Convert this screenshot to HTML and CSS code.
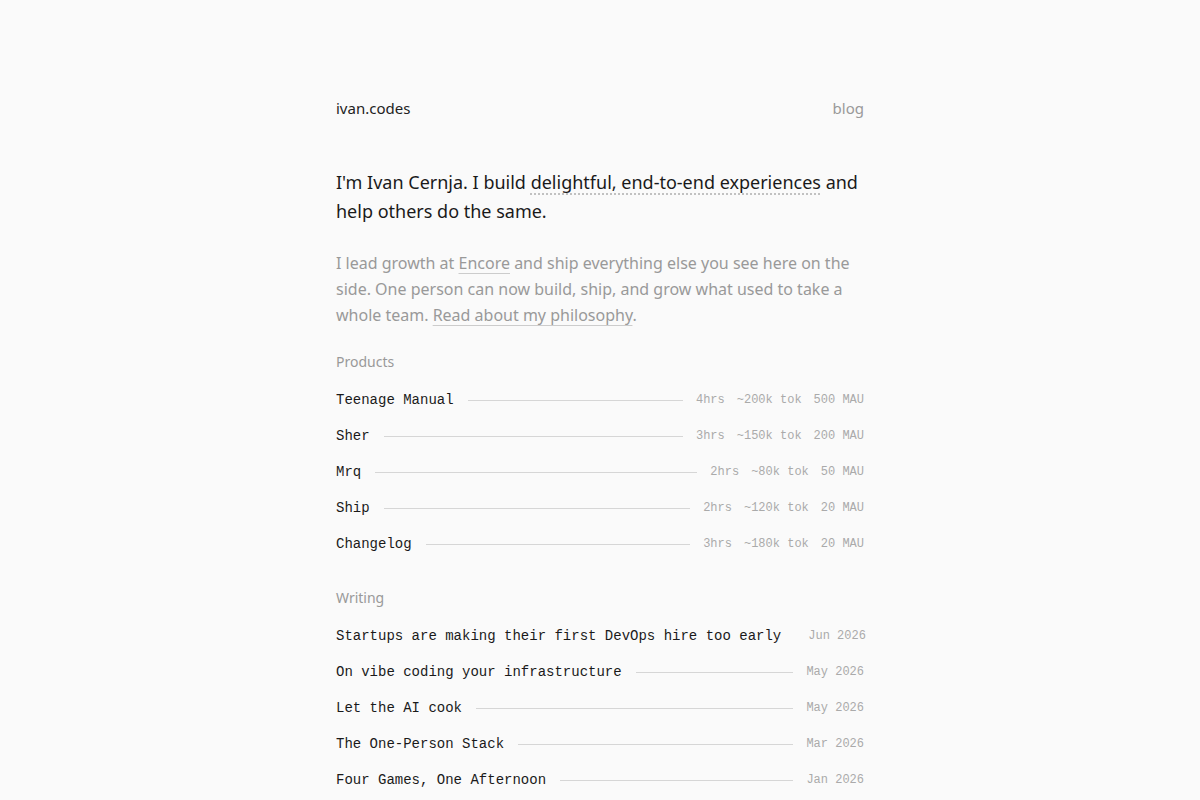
FILE: index.html
```html
<!DOCTYPE html>
<html lang="en">
<head>
    <meta charset="UTF-8">
    <meta name="viewport" content="width=device-width, initial-scale=1.0">
    <title>ivan.codes</title>
    <link rel="stylesheet" href="styles.css">
</head>
<body>

<div class="page">
    <header class="header">
        <a href="#" class="logo">ivan.codes</a>
        <a href="#blog" class="nav-link">blog</a>
    </header>

    <h1 class="intro">I'm Ivan Cernja. I build <span class="dotted">delightful, end-to-end experiences</span> and help others do the same.</h1>

    <p class="about">I lead growth at <a href="#">Encore</a> and ship everything else you see here on the side. One person can now build, ship, and grow what used to take a whole team. <a href="#">Read about my philosophy</a>.</p>

    <section class="section">
        <h2 class="section-title">Products</h2>
        <a href="#" class="row">
            <span class="row-name">Teenage Manual</span>
            <span class="row-line"></span>
            <span class="row-meta"><span>4hrs</span><span>~200k tok</span><span>500 MAU</span></span>
        </a>
        <a href="#" class="row">
            <span class="row-name">Sher</span>
            <span class="row-line"></span>
            <span class="row-meta"><span>3hrs</span><span>~150k tok</span><span>200 MAU</span></span>
        </a>
        <a href="#" class="row">
            <span class="row-name">Mrq</span>
            <span class="row-line"></span>
            <span class="row-meta"><span>2hrs</span><span>~80k tok</span><span>50 MAU</span></span>
        </a>
        <a href="#" class="row">
            <span class="row-name">Ship</span>
            <span class="row-line"></span>
            <span class="row-meta"><span>2hrs</span><span>~120k tok</span><span>20 MAU</span></span>
        </a>
        <a href="#" class="row">
            <span class="row-name">Changelog</span>
            <span class="row-line"></span>
            <span class="row-meta"><span>3hrs</span><span>~180k tok</span><span>20 MAU</span></span>
        </a>
    </section>

    <section class="section">
        <h2 class="section-title">Writing</h2>
        <a href="#" class="row">
            <span class="row-name">Startups are making their first DevOps hire too early</span>
            <span class="row-line"></span>
            <span class="row-meta">Jun 2026</span>
        </a>
        <a href="#" class="row">
            <span class="row-name">On vibe coding your infrastructure</span>
            <span class="row-line"></span>
            <span class="row-meta">May 2026</span>
        </a>
        <a href="#" class="row">
            <span class="row-name">Let the AI cook</span>
            <span class="row-line"></span>
            <span class="row-meta">May 2026</span>
        </a>
        <a href="#" class="row">
            <span class="row-name">The One-Person Stack</span>
            <span class="row-line"></span>
            <span class="row-meta">Mar 2026</span>
        </a>
        <a href="#" class="row">
            <span class="row-name">Four Games, One Afternoon</span>
            <span class="row-line"></span>
            <span class="row-meta">Jan 2026</span>
        </a>
    </section>
</div>

</body>
</html>
```

FILE: styles.css
```css
body {
    margin: 0;
    background-color: #fafafa;
    color: #1a1a1a;
    font-family: "Noto Sans", "Open Sans", sans-serif;
}
a {
    color: inherit;
    text-decoration: none;
}
.page {
    max-width: 528px;
    margin: 0 auto;
    padding: 96px 0 60px;
}
.header {
    display: flex;
    justify-content: space-between;
    align-items: center;
    font-size: 15px;
    line-height: 24px;
}
.logo {
    color: #222;
}
.nav-link {
    color: #999;
}
.intro {
    margin: 48px 0 0;
    font-size: 18px;
    font-weight: 400;
    line-height: 29px;
    color: #1a1a1a;
}
.dotted {
    text-decoration: underline dotted #bbb;
    text-underline-offset: 5px;
}
.about {
    margin: 24px 0 0;
    font-size: 16px;
    line-height: 26px;
    color: #999;
}
.about a {
    text-decoration: underline solid #ccc;
    text-underline-offset: 4px;
}
.section {
    margin-top: 23px;
}
.section + .section {
    margin-top: 25px;
}
.section-title {
    margin: 0 0 10px;
    font-size: 14px;
    font-weight: 400;
    line-height: 21px;
    color: #999;
}
.row {
    display: flex;
    align-items: center;
    gap: 13px;
    height: 36px;
    font-family: "Liberation Mono", "DejaVu Sans Mono", monospace;
}
.row-name {
    font-size: 14px;
    color: #1a1a1a;
    white-space: nowrap;
}
.row-line {
    flex: 1;
    height: 1px;
    margin-left: 1px;
    background-color: #d6d6d6;
}
.row-meta {
    display: flex;
    gap: 12px;
    font-size: 12px;
    color: #aaa;
    white-space: nowrap;
}
```
